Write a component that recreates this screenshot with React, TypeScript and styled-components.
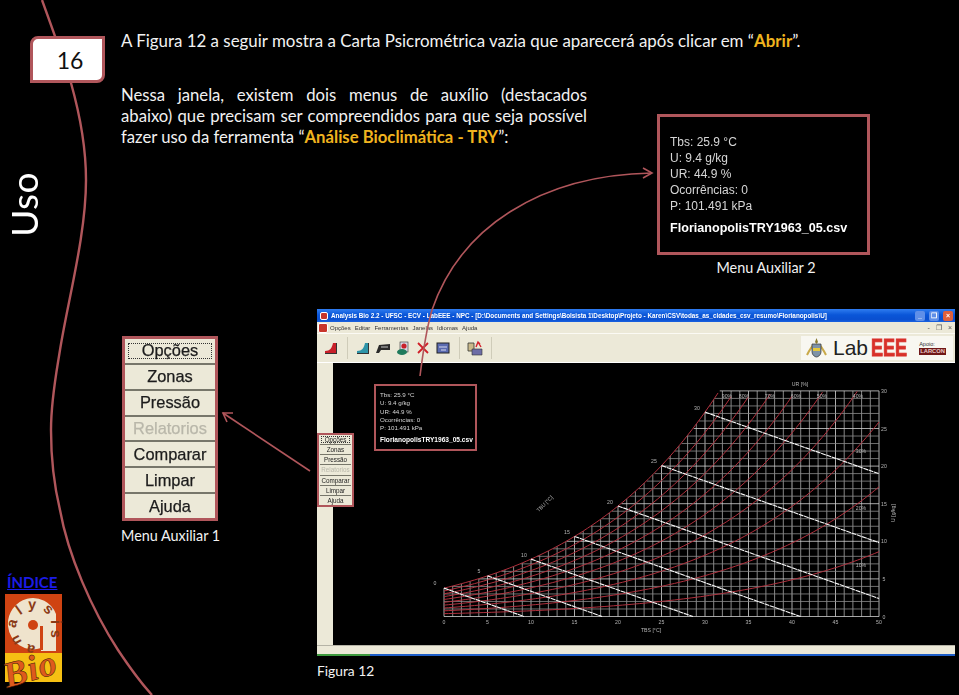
import React, {FunctionComponent} from "react";
import styled, {createGlobalStyle} from "styled-components";

const ACCENT = "#b0565b";
const BODY_FONT = `Lato, "Open Sans", sans-serif`;
const WIN_FONT = `"Liberation Sans", Arial, sans-serif`;

const GlobalStyle = createGlobalStyle`
  html, body {
    margin: 0;
    background: #000;
  }
`;

const Slide = styled.div`
  position: relative;
  display: grid;
  grid-template-columns: 121px 1fr;
  width: 959px;
  height: 695px;
  overflow: hidden;
  background: #000;
  color: #f2f2f2;
  font-family: ${BODY_FONT};
`;

const Overlay = styled.svg<{$front?: boolean}>`
  position: absolute;
  inset: 0;
  z-index: ${p => (p.$front ? 3 : 0)};
  pointer-events: none;
`;

const Rail = styled.aside`
  position: relative;
  z-index: 1;
  display: flex;
  flex-direction: column;
  align-items: flex-start;
  padding-top: 36px;
`;

const Badge = styled.div`
  display: flex;
  align-items: center;
  justify-content: center;
  box-sizing: border-box;
  width: 75px;
  height: 47px;
  margin-left: 30px;
  padding-left: 5px;
  border: 3px solid ${ACCENT};
  border-radius: 8px 0 8px 0;
  background: #fff;
  color: #111;
  font-size: 23px;
`;

const Section = styled.div`
  margin: 89px 0 0 3px;
  writing-mode: vertical-rl;
  transform: rotate(180deg);
  font-size: 37px;
  letter-spacing: .5px;
  line-height: 42px;
  color: #fff;
`;

const RailFoot = styled.div`
  display: flex;
  flex-direction: column;
  gap: 3px;
  margin-top: auto;
  padding: 0 0 1px 7px;
`;

const IndexLink = styled.a`
  color: #1c1ce6;
  font-size: 15px;
  font-weight: 700;
  line-height: 18px;
  text-decoration: underline;
`;

const LogoSvg = styled.svg`
  display: block;
  margin-left: -7px;
`;

const Main = styled.main`
  display: flex;
  flex-direction: column;
  padding-top: 30px;
`;

const Lead = styled.p`
  margin: 0;
  font-size: 16.9px;
  line-height: 21px;
`;

const Gold = styled.strong`
  color: #f0b41f;
  font-weight: 700;
`;

const TopRow = styled.div`
  display: flex;
  align-items: flex-start;
  gap: 70px;
  height: 224px;
  margin-top: 34px;
`;

const Note = styled.div`
  width: 466px;
  font-size: 16.7px;
  line-height: 21px;
`;

const NoteLine = styled.p<{$last?: boolean}>`
  margin: 0;
  text-align: left;
  text-align-last: ${p => (p.$last ? "left" : "justify")};
`;

const Figure = styled.figure<{$top?: number}>`
  display: flex;
  flex-direction: column;
  margin: ${p => p.$top ?? 0}px 0 0;
`;

const Caption = styled.figcaption<{$center?: boolean; $gap: number}>`
  margin-top: ${p => p.$gap}px;
  padding-left: ${p => (p.$center ? 5 : 0)}px;
  font-size: 14.4px;
  line-height: 20px;
  text-align: ${p => (p.$center ? "center" : "left")};
  white-space: nowrap;
`;

const InfoBox = styled.div<{$mini?: boolean}>`
  box-sizing: border-box;
  width: ${p => (p.$mini ? 103 : 213)}px;
  height: ${p => (p.$mini ? 67 : 141)}px;
  padding: ${p => (p.$mini ? "5px 0 0 4px" : "17px 0 0 10px")};
  border: ${p => (p.$mini ? 2 : 3)}px solid ${ACCENT};
  background: #000;
  color: #d6d6d6;
  font-family: ${WIN_FONT};
  font-size: ${p => (p.$mini ? 6.2 : 12)}px;
  line-height: ${p => (p.$mini ? 8.3 : 16)}px;
  white-space: nowrap;
  filter: blur(.3px);
`;

const InfoFile = styled.div<{$mini?: boolean}>`
  margin-top: ${p => (p.$mini ? 3.7 : 6)}px;
  color: #fff;
  font-size: ${p => (p.$mini ? 6.6 : 12.6)}px;
  font-weight: 700;
`;

const LowerRow = styled.div`
  display: grid;
  grid-template-columns: 196px 1fr;
  align-items: start;
`;

const MenuBox = styled.div<{$mini?: boolean}>`
  display: flex;
  flex-direction: column;
  box-sizing: border-box;
  width: ${p => (p.$mini ? 37 : 96)}px;
  height: ${p => (p.$mini ? 74 : 185)}px;
  margin-left: ${p => (p.$mini ? 0 : 1)}px;
  padding: ${p => (p.$mini ? "0 1px" : "0")};
  border: ${p => (p.$mini ? 2 : 3)}px solid ${ACCENT};
  background: #ece9d8;
  font-family: ${WIN_FONT};
  filter: blur(.3px);
`;

const MenuButton = styled.div<{$mini?: boolean; $off?: boolean}>`
  position: relative;
  flex: 1;
  display: flex;
  align-items: center;
  justify-content: center;
  border-bottom: ${p => (p.$mini ? 1 : 2)}px solid #77766a;
  color: ${p => (p.$off ? "#b9b7aa" : "#1c1c1c")};
  font-size: ${p => (p.$mini ? 6.3 : 16.4)}px;
  -webkit-text-stroke: ${p => (p.$mini ? 0 : 0.25)}px;
  white-space: nowrap;

  &:last-child {
    border-bottom: 0;
  }
`;

const FocusRing = styled.span<{$mini?: boolean}>`
  position: absolute;
  inset: ${p => (p.$mini ? "1px" : "4px 3px")};
  border: 1px dotted #333;
`;

const WindowColumn = styled.div`
  display: flex;
  flex-direction: column;
`;

const AppWindow = styled.div`
  display: flex;
  flex-direction: column;
  width: 638px;
  height: 347px;
  background: #ece9d8;
  font-family: ${WIN_FONT};
`;

const TitleBar = styled.div`
  display: flex;
  align-items: center;
  gap: 3px;
  height: 13px;
  padding: 0 2px 0 3px;
  background: linear-gradient(#2f7cf0, #0a56d8 45%, #0a4fd0 80%, #1a62e0);
  color: #fff;
  font-size: 6.33px;
  font-weight: 700;
  white-space: nowrap;
  filter: blur(.35px);
`;

const TitleText = styled.span`
  flex: 1;
`;

const CaptionButton = styled.span<{$close?: boolean}>`
  display: flex;
  align-items: center;
  justify-content: center;
  width: 10px;
  height: 10px;
  margin-left: 1px;
  border-radius: 2px;
  background: ${p => (p.$close ? "#e0603c" : "#5f8fe8")};
  color: #fff;
  font-size: 7px;
`;

const AppIcon = styled.span<{$menu?: boolean}>`
  box-sizing: border-box;
  width: ${p => (p.$menu ? 10 : 8)}px;
  height: ${p => (p.$menu ? 10 : 8)}px;
  border: 1px solid #fff;
  border-radius: 2px;
  background: #c8352b;
`;

const MenuBar = styled.div`
  display: flex;
  align-items: center;
  height: 11px;
  padding-left: 1px;
  color: #333;
  font-size: 6px;
  filter: blur(.25px);
`;

const MenuItem = styled.span<{$gap: number}>`
  margin-left: ${p => p.$gap}px;
`;

const WindowControls = styled.span`
  display: flex;
  gap: 6px;
  margin-left: auto;
  padding-right: 3px;
  color: #555;
  font-size: 7px;
`;

const Toolbar = styled.div`
  display: flex;
  align-items: center;
  box-sizing: border-box;
  height: 30px;
  padding: 0 2px 0 4px;
  border-top: 1px solid #fbfaf4;
  border-bottom: 1px solid #fff;
`;

const ToolIcon = styled.svg`
  display: block;
  width: 20px;
  height: 16px;
  filter: blur(.3px);
`;

const ToolSeparator = styled.span`
  width: 1px;
  height: 22px;
  margin: 0 5px 0 6px;
  background: #cfccb9;
`;

const Sponsor = styled.div`
  display: flex;
  align-items: center;
  box-sizing: border-box;
  width: 152px;
  height: 24px;
  margin-left: auto;
  padding: 0 7px 0 5px;
  background: #f8f7f1;
  filter: blur(.35px);
`;

const LabText = styled.span`
  display: flex;
  align-items: center;
  margin-left: 6px;
  color: #222;
  font-size: 21px;
  line-height: 24px;
`;

const LabEmphasis = styled.b`
  display: inline-block;
  margin-left: 3px;
  color: #d8302a;
  font-size: 18px;
  font-weight: 700;
  line-height: 18px;
  -webkit-text-stroke: .7px #d8302a;
  transform: scaleY(1.35);
`;

const SupportColumn = styled.span`
  display: flex;
  flex-direction: column;
  margin-left: auto;
  color: #333;
  font-size: 5.5px;
  line-height: 7px;
`;

const SupportTag = styled.b`
  padding: 0 1px;
  background: #701818;
  color: #e9c9c9;
  font-size: 5.8px;
`;

const Workspace = styled.div`
  position: relative;
  display: flex;
  height: 282px;
`;

const Strip = styled.div`
  width: 16px;
  background: #ece9d8;
`;

const Canvas = styled.div`
  position: relative;
  flex: 1;
  background: #000;
`;

const Chart = styled.svg`
  display: block;
  filter: blur(.3px);
`;

const FloatingInfo = styled.div`
  position: absolute;
  top: 21px;
  left: 41px;
`;

const FloatingMenu = styled.div`
  position: absolute;
  top: 70px;
  left: 0;
`;

const StatusBar = styled.div`
  flex: 1;
  border-top: 1px solid #b5b3a6;
`;

const TaskStrip = styled.div`
  height: 2px;
  background: linear-gradient(90deg, #3e9a3e 0 53px, #1f5fc8 53px);
`;

const FigureCaption = styled.div`
  margin-top: 5px;
  font-size: 13.8px;
  line-height: 20px;
`;

const MENU_ITEMS = ["Opções", "Zonas", "Pressão", "Relatorios", "Comparar", "Limpar", "Ajuda"];
const INFO_LINES = ["Tbs: 25.9 °C", "U: 9.4 g/kg", "UR: 44.9 %", "Ocorrências: 0", "P: 101.491 kPa"];
const TITLE =
  "Analysis Bio 2.2 - UFSC - ECV - LabEEE - NPC - [D:\\Documents and Settings\\Bolsista 1\\Desktop\\Projeto - Karen\\CSV\\todas_as_cidades_csv_resumo\\Florianopolis\\U]";

const range = (from: number, to: number, step = 1) => {
  const out: number[] = [];
  for (let v = from; v <= to; v += step) out.push(v);
  return out;
};

const sx = (t: number) => 444 + t * 8.7;
const sy = (u: number) => 616.5 - u * 7.52;

const saturation = (t: number) => {
  const p = 0.61078 * Math.exp((17.27 * t) / (t + 237.3));
  return (622 * p) / (101.325 - p);
};

const rhLine = (rh: number) =>
  range(0, 50, 0.5)
    .map(t => [t, (saturation(t) * rh) / 100])
    .filter(([, u]) => u <= 30)
    .map(([t, u]) => `${sx(t)},${sy(u)}`)
    .join(" ");

const satTemp = (u: number) => range(0, 50, 0.1).find(t => saturation(t) >= u) ?? 0;

const Psychrometric: FunctionComponent = () => (
  <Chart width={622} height={282} viewBox="333 363 622 282">
    {range(0, 50).map(t => (
      <line
        key={t}
        x1={sx(t)}
        x2={sx(t)}
        y1={sy(0)}
        y2={sy(Math.min(30, saturation(t)))}
        stroke={t % 5 === 0 ? "#d8d8d8" : "#a8a8a8"}
        strokeWidth={0.8}
      />
    ))}
    {range(0, 30).map(u => (
      <line
        key={u}
        x1={sx(u < 3.8 ? 0 : satTemp(u))}
        x2={sx(50)}
        y1={sy(u)}
        y2={sy(u)}
        stroke={u % 5 === 0 ? "#d0d0d0" : "#8c8c8c"}
        strokeWidth={0.8}
      />
    ))}
    {[10, 20, 30, 40, 50, 60, 70, 80, 90, 100].map(rh => (
      <polyline key={rh} points={rhLine(rh)} fill="none" stroke="#b0303d" strokeWidth={1} />
    ))}
    {[0, 5, 10, 15, 20, 25, 30].map(tw => {
      const u0 = saturation(tw);
      const end = Math.min(50, tw + u0 / 0.41);
      return (
        <line
          key={tw}
          x1={sx(tw)}
          y1={sy(u0)}
          x2={sx(end)}
          y2={sy(u0 - (end - tw) * 0.41)}
          stroke="#f8f8f8"
          strokeWidth={1.1}
          strokeDasharray="5 .6"
        />
      );
    })}
    <g fill="#b5b5b5" fontFamily={WIN_FONT} fontSize={5.2} textAnchor="middle">
      {range(0, 50, 5).map(t => (
        <text key={t} x={sx(t)} y={624}>{t}</text>
      ))}
      {range(0, 30, 5).map(u => (
        <text key={u} x={884} y={sy(u) + 2}>{u}</text>
      ))}
      {([[0, 435, 585], [5, 479, 573], [10, 524, 557], [15, 567, 534], [20, 610, 504], [25, 654, 463], [30, 697, 410]] as const).map(
        ([v, x, y]) => (
          <text key={v} x={x} y={y}>{v}</text>
        ),
      )}
      {([["90%", 727], ["80%", 744], ["70%", 770], ["60%", 796], ["50%", 822], ["40%", 858]] as const).map(([label, x]) => (
        <text key={label} x={x} y={398}>{label}</text>
      ))}
      {([["30%", 451], ["20%", 508], ["10%", 565]] as const).map(([label, y]) => (
        <text key={label} x={861} y={y + 2}>{label}</text>
      ))}
      <text x={800} y={386}>UR [%]</text>
      <text x={651} y={632}>TBS [°C]</text>
      <text transform="translate(895 513) rotate(-90)">U [g/kg]</text>
      <text transform="translate(546 505) rotate(-45)">TBU [°C]</text>
    </g>
  </Chart>
);

const ToolbarIcon: FunctionComponent<{children: React.ReactNode}> = ({children}) => (
  <ToolIcon viewBox="0 0 20 16">{children}</ToolIcon>
);

const InfoPanel: FunctionComponent<{mini?: boolean}> = ({mini}) => (
  <InfoBox $mini={mini}>
    {INFO_LINES.map(line => (
      <div key={line}>{line}</div>
    ))}
    <InfoFile $mini={mini}>FlorianopolisTRY1963_05.csv</InfoFile>
  </InfoBox>
);

const MenuPanel: FunctionComponent<{mini?: boolean}> = ({mini}) => (
  <MenuBox $mini={mini}>
    {MENU_ITEMS.map((item, index) => (
      <MenuButton key={item} $mini={mini} $off={item === "Relatorios"}>
        {index === 0 && <FocusRing $mini={mini} />}
        {item}
      </MenuButton>
    ))}
  </MenuBox>
);

const AnalysisLogo: FunctionComponent = () => (
  <LogoSvg width={77} height={100} viewBox="-5 0 77 100">
    <rect x={0} y={0} width={57} height={59} fill="#cf4312" />
    <rect x={0} y={59} width={57} height={29} fill="#f6c013" />
    <path d="M3 32 A25 26 0 0 1 51 20 L51 57 L36 57 L36 54 A25 26 0 0 1 3 32 Z" fill="#efe3cc" />
    <circle cx={28} cy={31} r={5} fill="#cf4312" />
    <rect x={35} y={32} width={3} height={24} fill="#cf4312" />
    <path id="logo-ring" d="M31 51 A18 18 0 1 1 46 26 L46 58" fill="none" />
    <text fontFamily={WIN_FONT} fontSize={14.5} fontWeight={700} fill="#8a3a16" letterSpacing={5.6}>
      <textPath href="#logo-ring">analysis</textPath>
    </text>
    <text
      transform="translate(2 94) rotate(-16)"
      fontFamily={`"Liberation Serif", serif`}
      fontStyle="italic"
      fontWeight={700}
      fontSize={36}
      fill="#de5a1d"
      stroke="#3a1606"
      strokeWidth={0.5}
      letterSpacing={1}
    >
      Bio
    </text>
  </LogoSvg>
);

const App: FunctionComponent = () => (
  <Slide>
    <GlobalStyle />
    <Overlay width={959} height={695}>
      <path
        d="M42 0 C50 22 62 55 71 83 C80 115 86 150 86 180 C86 235 68 300 60 350 C56 375 51 400 51 430 C51 458 54 485 60 510 C68 555 92 610 118 650 C128 665 140 682 152 695"
        fill="none"
        stroke={ACCENT}
        strokeWidth={2.4}
      />
    </Overlay>
    <Rail>
      <Badge>16</Badge>
      <Section>Uso</Section>
      <RailFoot>
        <IndexLink href="#indice">ÍNDICE</IndexLink>
        <AnalysisLogo />
      </RailFoot>
    </Rail>
    <Main>
      <Lead>
        A Figura 12 a seguir mostra a Carta Psicrométrica vazia que aparecerá após clicar em “<Gold>Abrir</Gold>”.
      </Lead>
      <TopRow>
        <Note>
          <NoteLine>Nessa janela, existem dois menus de auxílio (destacados</NoteLine>
          <NoteLine>abaixo) que precisam ser compreendidos para que seja possível</NoteLine>
          <NoteLine $last>
            fazer uso da ferramenta “<Gold>Análise Bioclimática - TRY</Gold>”:
          </NoteLine>
        </Note>
        <Figure $top={29}>
          <InfoPanel />
          <Caption $center $gap={3}>Menu Auxiliar 2</Caption>
        </Figure>
      </TopRow>
      <LowerRow>
        <Figure $top={27}>
          <MenuPanel />
          <Caption $gap={5}>Menu Auxiliar 1</Caption>
        </Figure>
        <WindowColumn>
          <AppWindow>
            <TitleBar>
              <AppIcon />
              <TitleText>{TITLE}</TitleText>
              <CaptionButton>_</CaptionButton>
              <CaptionButton>❐</CaptionButton>
              <CaptionButton $close>×</CaptionButton>
            </TitleBar>
            <MenuBar>
              <AppIcon $menu />
              <MenuItem $gap={2}>Opções</MenuItem>
              <MenuItem $gap={4}>Editar</MenuItem>
              <MenuItem $gap={4}>Ferramentas</MenuItem>
              <MenuItem $gap={4}>Janelas</MenuItem>
              <MenuItem $gap={4}>Idiomas</MenuItem>
              <MenuItem $gap={4}>Ajuda</MenuItem>
              <WindowControls>
                <span>-</span>
                <span>❐</span>
                <span>×</span>
              </WindowControls>
            </MenuBar>
            <Toolbar>
              <ToolbarIcon>
                <path d="M4 13 L4 11 C9 11 11 8 12 3 L15 3 L15 13 Z" fill="#c8202a" />
                <path d="M4 13 H16 V14 H4 Z M15 3 H16 V13 H15 Z" fill="#333" />
              </ToolbarIcon>
              <ToolSeparator />
              <ToolbarIcon>
                <path d="M4 13 L4 11 C9 11 11 8 12 3 L15 3 L15 13 Z" fill="#2e94a8" />
                <path d="M4 13 H16 V14 H4 Z M15 3 H16 V13 H15 Z" fill="#333" />
              </ToolbarIcon>
              <ToolbarIcon>
                <path d="M3 13 L6 5 L17 4 L17 10 L8 10 L6 13 Z" fill="#2a2a2a" />
                <path d="M8 6 H15 V8 H8 Z" fill="#777" />
              </ToolbarIcon>
              <ToolbarIcon>
                <rect x={7} y={2} width={8} height={10} fill="#d8d8e4" stroke="#333" strokeWidth={0.6} />
                <circle cx={11} cy={6} r={2.6} fill="#c8202a" />
                <ellipse cx={9} cy={12} rx={5} ry={3} fill="#1f7a5c" />
              </ToolbarIcon>
              <ToolbarIcon>
                <path d="M5 3 L15 13 M15 3 L5 13" stroke="#d01f28" strokeWidth={1.8} />
              </ToolbarIcon>
              <ToolbarIcon>
                <rect x={4} y={3} width={12} height={10} fill="#5a6ab0" stroke="#222" strokeWidth={1} />
                <path d="M6 7 H14 M8 10 H13" stroke="#d5d8ee" strokeWidth={1} />
              </ToolbarIcon>
              <ToolSeparator />
              <ToolbarIcon>
                <path d="M3 3 H9 V11 H3 Z" fill="#c9b98a" stroke="#333" strokeWidth={0.8} />
                <path d="M7 9 H17 V15 H7 Z" fill="#6d6da6" stroke="#333" strokeWidth={0.6} />
                <path d="M11 7 L13 2 L15 4 M13 2 L16 7" stroke="#d3202a" strokeWidth={1.4} fill="none" />
              </ToolbarIcon>
              <ToolSeparator />
              <Sponsor>
                <svg width={21} height={22} viewBox="0 0 21 22">
                  <path d="M1 18 C4 12 6 10 7 8 M20 18 C17 12 15 10 14 8" stroke="#c9a94a" strokeWidth={2} fill="none" />
                  <path d="M6 7 H15 V15 C15 18 12 20 10.500 20 C9 20 6 18 6 15 Z" fill="#7f93a8" stroke="#333" strokeWidth={0.7} />
                  <path d="M7 11 H14 V14 H7 Z" fill="#e7c93c" />
                  <path d="M10.500 1 L12 5 L10.500 7 L9 5 Z" fill="#8a7a30" />
                </svg>
                <LabText>
                  Lab<LabEmphasis>EEE</LabEmphasis>
                </LabText>
                <SupportColumn>
                  Apoio:
                  <SupportTag>LARCON</SupportTag>
                </SupportColumn>
              </Sponsor>
            </Toolbar>
            <Workspace>
              <Strip />
              <Canvas>
                <Psychrometric />
                <FloatingInfo>
                  <InfoPanel mini />
                </FloatingInfo>
              </Canvas>
              <FloatingMenu>
                <MenuPanel mini />
              </FloatingMenu>
            </Workspace>
            <StatusBar />
            <TaskStrip />
          </AppWindow>
          <FigureCaption>Figura 12</FigureCaption>
        </WindowColumn>
      </LowerRow>
    </Main>
    <Overlay $front width={959} height={695}>
      <g fill="none" stroke={ACCENT} strokeWidth={1.6}>
        <path d="M420 376 C423 352 426 330 432 310 C460 228 540 175 652 173" />
        <path d="M643 168 L652 173 L643 178" />
        <path d="M310 471 L223 413" />
        <path d="M233 413 L223 413 L227 422" />
      </g>
    </Overlay>
  </Slide>
);

export default App;
